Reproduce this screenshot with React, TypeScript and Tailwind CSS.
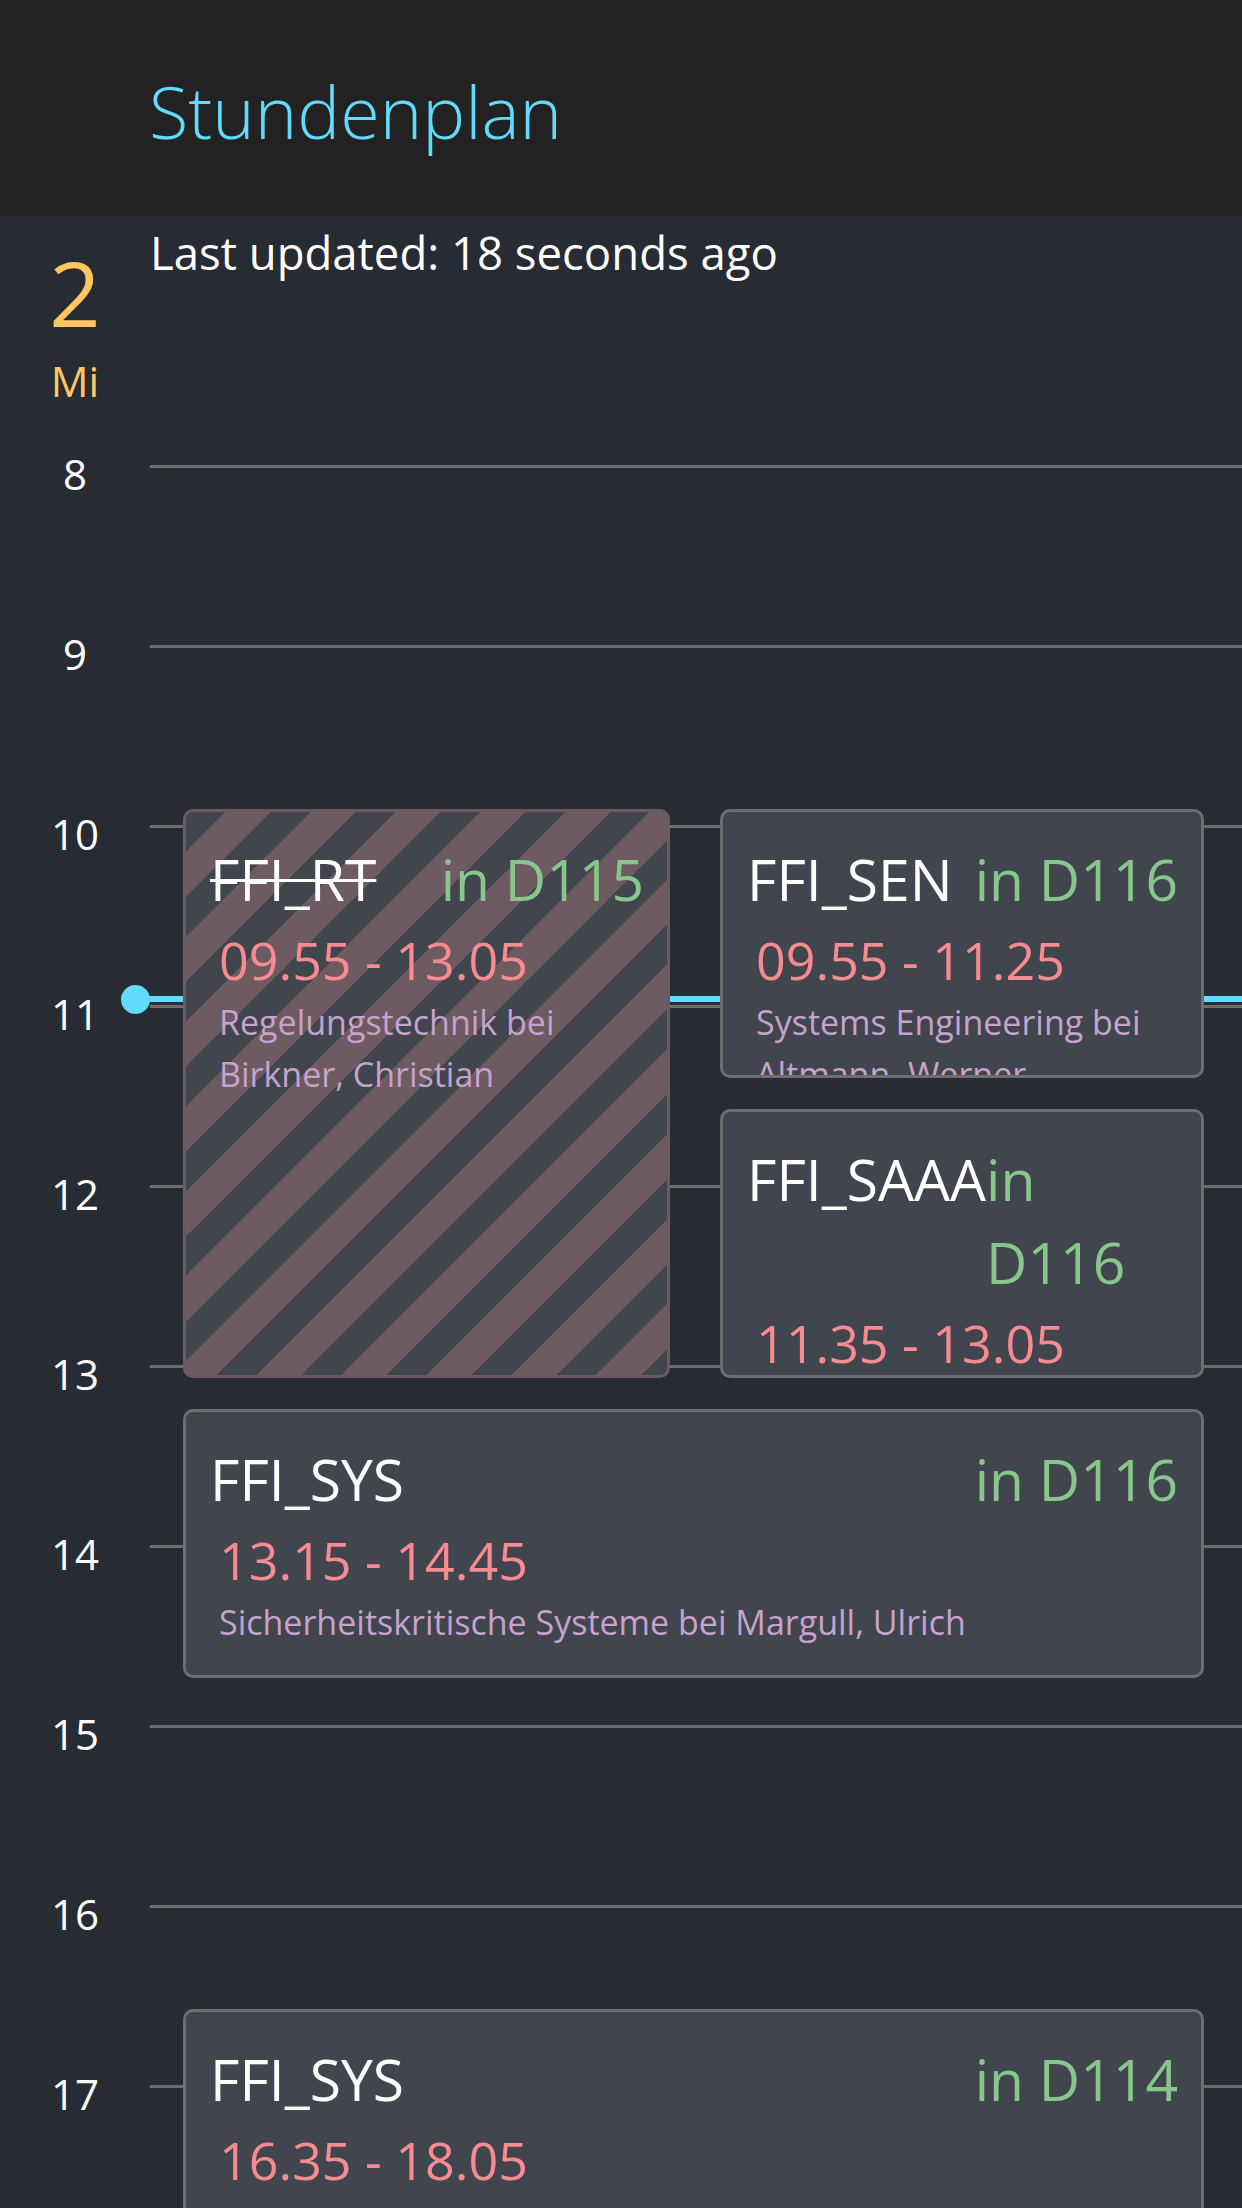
import React from 'react';

type Column = 'left' | 'right' | 'full';

interface Lesson {
  code: string;
  room: string;
  start: string;
  end: string;
  desc?: string;
  column: Column;
  cancelled?: boolean;
}

const HOUR_HEIGHT = 180;
const FIRST_HOUR = 8;

const lessons: Lesson[] = [
  { code: 'FFI_RT', room: 'in D115', start: '09.55', end: '13.05', desc: 'Regelungstechnik bei Birkner, Christian', column: 'left', cancelled: true },
  { code: 'FFI_SEN', room: 'in D116', start: '09.55', end: '11.25', desc: 'Systems Engineering bei Altmann, Werner', column: 'right' },
  { code: 'FFI_SAAA', room: 'in D116', start: '11.35', end: '13.05', column: 'right' },
  { code: 'FFI_SYS', room: 'in D116', start: '13.15', end: '14.45', desc: 'Sicherheitskritische Systeme bei Margull, Ulrich', column: 'full' },
  { code: 'FFI_SYS', room: 'in D114', start: '16.35', end: '18.05', column: 'full' },
];

const hours = [8, 9, 10, 11, 12, 13, 14, 15, 16, 17, 18];

const columnClass: Record<Column, string> = {
  left: 'left-[183px] w-[487px]',
  right: 'left-[720px] w-[484px]',
  full: 'left-[183px] w-[1021px]',
};

function toOffset(time: string) {
  const [h, m] = time.split('.').map(Number);
  return (h - FIRST_HOUR + m / 60) * HOUR_HEIGHT;
}

function LessonCard({ lesson }: { lesson: Lesson }) {
  const top = toOffset(lesson.start) - 1;
  const height = toOffset(lesson.end) - toOffset(lesson.start) - 1;
  const skin = lesson.cancelled
    ? 'border-[#6d5a61] bg-[repeating-linear-gradient(135deg,#41454d_0px,#41454d_28px,#6e5a61_28px,#6e5a61_60px)]'
    : 'border-[#6e6e6e] bg-[#41454d]';

  return (
    <div
      className={`absolute ${columnClass[lesson.column]} ${skin} overflow-hidden rounded-[10px] border-[3px] pt-[26px] pl-[24px] pr-[23px]`}
      style={{ top, height }}
    >
      <div className="flex justify-between text-[57px] leading-[83px]">
        <span className={`shrink-0 text-white ${lesson.cancelled ? 'line-through decoration-[3px]' : ''}`}>
          {lesson.code}
        </span>
        <span className="text-left text-[#88c68b]">{lesson.room}</span>
      </div>
      <div className="mt-[5px] pl-[9px] text-[52px] leading-[68px] text-[#f88a91]">
        {lesson.start} - {lesson.end}
      </div>
      {lesson.desc && (
        <div className="mt-[2px] pl-[9px] text-[34px] leading-[52px] text-[#c6a3cd]">{lesson.desc}</div>
      )}
    </div>
  );
}

export default function App() {
  return (
    <div className="h-[2208px] w-full overflow-hidden bg-[#272b34] font-['Open_Sans',sans-serif]">
      <header className="h-[216px] bg-[#222222] pl-[149px] pt-[75px]">
        <h1 className="text-[72px] font-light leading-[72px] text-[#61dafb]">Stundenplan</h1>
      </header>

      <div className="flex h-[249px]">
        <div className="flex w-[150px] flex-col items-center text-[#ffc75f]">
          <span className="mt-[31px] text-[90px] leading-none">2</span>
          <span className="mt-[23px] text-[42px] leading-none">Mi</span>
        </div>
        <p className="pt-[6px] text-[45.5px] leading-[60px] text-white">Last updated: 18 seconds ago</p>
      </div>

      <div className="relative">
        {hours.map((h) => (
          <div key={h} className="flex h-[180px]">
            <div className="w-[150px] text-center">
              <span className="-mt-[12px] block text-[42px] leading-[42px] text-white">{h}</span>
            </div>
            <div className="h-[3px] flex-1 bg-[#6d6d6d]" />
          </div>
        ))}

        <div className="absolute left-[135px] right-0 top-[531px] h-[6px] bg-[#61dafb]" />
        <div className="absolute left-[121px] top-[520px] h-[29px] w-[29px] rounded-full bg-[#61dafb]" />

        {lessons.map((lesson, i) => (
          <LessonCard key={i} lesson={lesson} />
        ))}
      </div>
    </div>
  );
}
